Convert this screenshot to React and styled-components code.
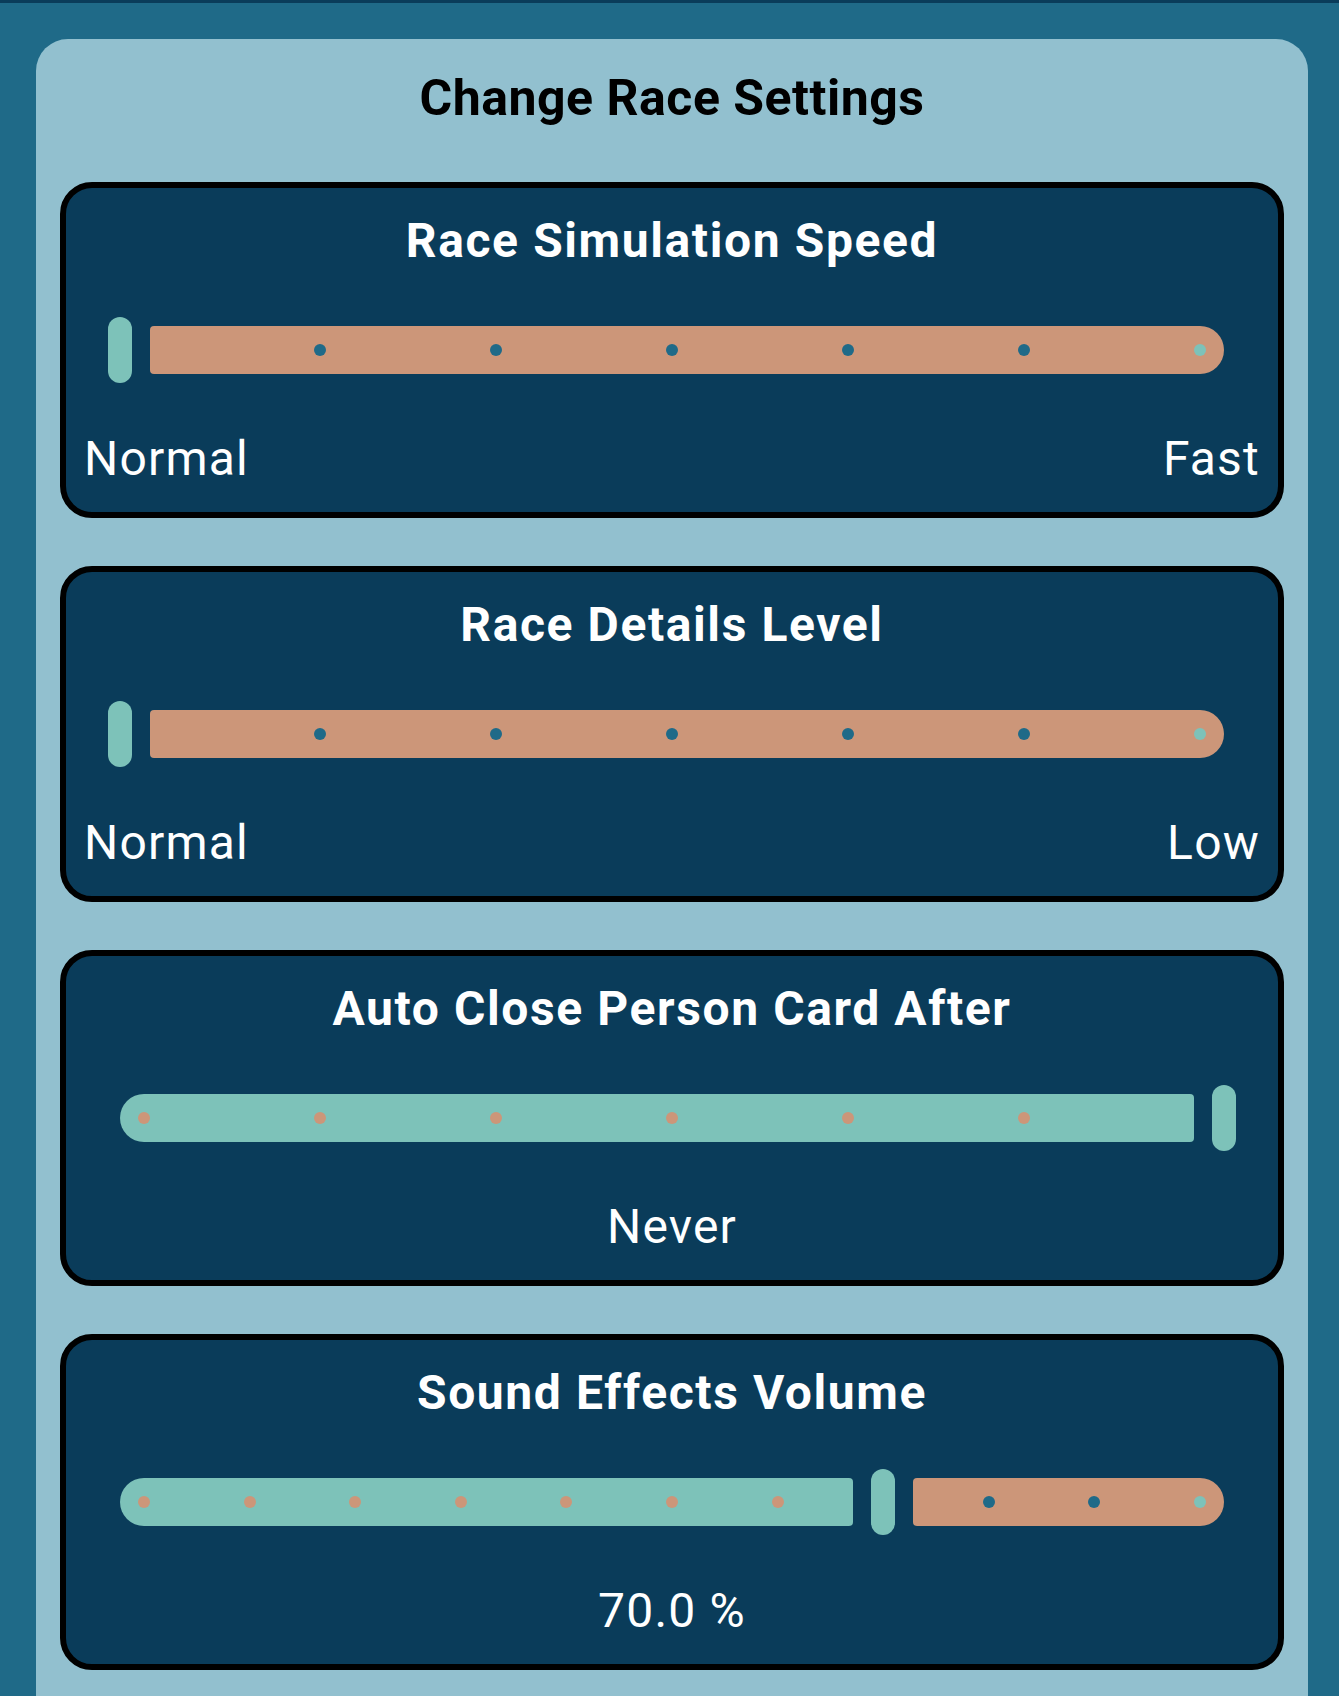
import React from 'react'
import styled, { createGlobalStyle } from 'styled-components'

const GlobalStyle = createGlobalStyle`
  html, body {
    margin: 0;
    padding: 0;
    background: #1f6a88;
  }
  body {
    font-family: Roboto, "Noto Sans", sans-serif;
    border-top: 3px solid #0a3c5a;
    overflow: hidden;
  }
`;

const Screen = styled.div`
  padding: 36px 31px 0 36px;
`;

const Panel = styled.section`
  box-sizing: border-box;
  min-height: 1657px;
  background: #92c0cf;
  border-radius: 32px 32px 0 0;
  padding: 31px 24px 0;
  display: flex;
  flex-direction: column;
  gap: 48px;
`;

const PanelTitle = styled.h1`
  margin: 0 0 8px;
  text-align: center;
  font-size: 50px;
  line-height: 56px;
  font-weight: 700;
  color: #000;
  letter-spacing: 0.5px;
`;

const Card = styled.div`
  background: #0a3c5a;
  border: 6px solid #000;
  border-radius: 32px;
  padding: 25px 18px;
  color: #fff;
`;

const CardTitle = styled.h2`
  margin: 0;
  text-align: center;
  font-size: 48px;
  line-height: 56px;
  font-weight: 700;
  letter-spacing: 1.6px;
`;

const SliderRow = styled.div`
  height: 162px;
  margin: 0 24px;
  display: flex;
  align-items: center;
`;

const Track = styled.div`
  position: relative;
  height: 48px;
  flex: ${p => (p.$active ? '0 0 auto' : '1 1 auto')};
  margin: ${p => (p.$active ? '0 0 0 12px' : '0 12px 0 0')};
  background: ${p => (p.$active ? '#7dc2b9' : '#cc9679')};
  border-radius: ${p => (p.$active ? '24px 4px 4px 24px' : '4px 24px 24px 4px')};
`;

const Thumb = styled.div`
  flex: none;
  width: 24px;
  height: 66px;
  margin: 0 ${p => (p.$end ? 0 : 18)}px 0 ${p => (p.$start ? 0 : 18)}px;
  border-radius: 12px;
  background: #7dc2b9;
`;

const Dot = styled.span`
  position: absolute;
  top: 18px;
  width: 12px;
  height: 12px;
  margin-left: -6px;
  border-radius: 50%;
  background: ${p => p.$color};
`;

const Labels = styled.div`
  display: flex;
  justify-content: ${p => (p.$center ? 'center' : 'space-between')};
  font-size: 48px;
  line-height: 56px;
  letter-spacing: 1.2px;
`;

const RAIL = 1104;
const GAP = 30;

// thumb sits on the stop dots, except at the very ends where it reaches the track end
const thumbAt = (p) => (p <= 0 ? 0 : p >= 1 ? RAIL : 24 + p * (RAIL - 48));

const Slider = ({ value, steps }) => {
  const x = thumbAt(value);
  const active = [];
  const inactive = [];
  for (let k = 0; k <= steps; k++) {
    const dx = 24 + (k * (RAIL - 48)) / steps;
    if (Math.abs(dx - x) < GAP) continue;
    if (dx < x) {
      active.push(<Dot key={k} $color="#cc9679" style={{ left: dx }} />);
    } else {
      const color = k === steps ? '#7dc2b9' : '#1f6a88';
      inactive.push(<Dot key={k} $color={color} style={{ left: dx - x - GAP }} />);
    }
  }
  const start = x - GAP <= 0;
  const end = x + GAP >= RAIL;
  return (
    <SliderRow>
      {!start && <Track $active style={{ width: x - GAP }}>{active}</Track>}
      <Thumb $start={start} $end={end} />
      {!end && <Track>{inactive}</Track>}
    </SliderRow>
  );
};

const settings = [
  { title: 'Race Simulation Speed', value: 0, steps: 6, labels: ['Normal', 'Fast'] },
  { title: 'Race Details Level', value: 0, steps: 6, labels: ['Normal', 'Low'] },
  { title: 'Auto Close Person Card After', value: 1, steps: 6, labels: ['Never'] },
  { title: 'Sound Effects Volume', value: 0.7, steps: 10, labels: ['70.0 %'] },
];

export default function App() {
  return (
    <>
      <GlobalStyle />
      <Screen>
        <Panel>
          <PanelTitle>Change Race Settings</PanelTitle>
          {settings.map(s => (
            <Card key={s.title}>
              <CardTitle>{s.title}</CardTitle>
              <Slider value={s.value} steps={s.steps} />
              <Labels $center={s.labels.length === 1}>
                {s.labels.map(l => <span key={l}>{l}</span>)}
              </Labels>
            </Card>
          ))}
        </Panel>
      </Screen>
    </>
  );
}
